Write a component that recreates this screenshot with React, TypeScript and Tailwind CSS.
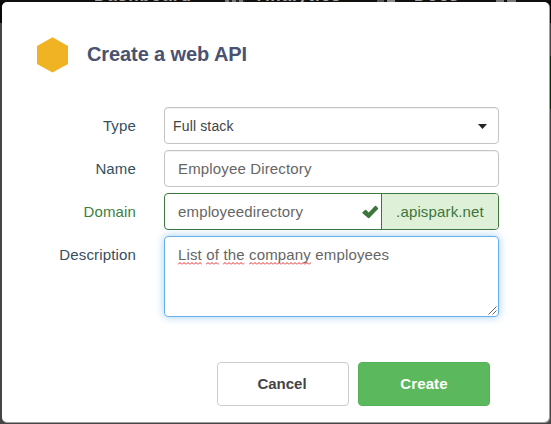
import type { ReactNode } from 'react';

function NavItem({ label, className }: { label: string; className: string }) {
  return (
    <span className={`absolute bottom-[-5px] text-[17px] leading-[22px] font-bold whitespace-nowrap text-[#a3a3a3] ${className}`}>
      {label}
    </span>
  );
}

function Backdrop() {
  return (
    <div className="absolute inset-0 flex flex-col bg-[#454545]">
      <div className="relative h-[2px] overflow-hidden bg-[#12100e]">
        <NavItem label="Dashboard" className="left-[94px] tracking-[1px]" />
        <NavItem label="Analytics" className="left-[257px] tracking-[1px]" />
        <NavItem label="Docs" className="left-[414px] tracking-[1px]" />
        <span className="absolute left-[225px] h-[2px] w-[20px] bg-[repeating-linear-gradient(90deg,#777_0_4px,#222_4px_7px)]" />
        <span className="absolute left-[377px] h-[2px] w-[7px] bg-[#555]" />
        <span className="absolute left-[387px] h-[2px] w-[8px] bg-[#888]" />
        <span className="absolute left-[496px] h-[2px] w-[8px] bg-[#777]" />
        <span className="absolute left-[507px] h-[2px] w-[9px] bg-[#777]" />
      </div>
      <div className="h-[21px] bg-[#080808]" />
      <div className="h-[33px]" />
      <div className="ml-auto h-[53px] w-[4px] bg-[#062a0b]" />
    </div>
  );
}

function Row({ label, valid, children }: { label: string; valid?: boolean; children: ReactNode }) {
  return (
    <div className="flex">
      <label
        className={`w-[134px] shrink-0 pt-[9px] text-right text-[15px] leading-[20px] tracking-[0.15px] ${valid ? 'text-[#3c7f3e]' : 'text-[#34505e]'}`}
      >
        {label}
      </label>
      <div className="ml-[28px] w-[335px]">{children}</div>
    </div>
  );
}

export default function App() {
  return (
    <div className="relative h-[424px] w-[551px] overflow-hidden font-['Liberation_Sans',Arial,sans-serif]">
      <Backdrop />
      <div className="relative mt-[2px] ml-[2px] flex h-[420px] w-[547px] flex-col rounded-[5px] bg-white shadow-[0.5px_0.5px_0_0.5px_#a0a0a0]">
        <header className="flex h-[105px] items-start pt-[35px] pl-[35px]">
          <svg width="31" height="36" viewBox="0 0 31 36" fill="#f0b323">
            <path d="M15.5 0.2 31 9V27L15.5 35.6 0 27V9Z" />
          </svg>
          <h1 className="ml-[19px] pt-[5px] text-[20px] leading-[24px] font-bold tracking-[-0.1px] text-[#4a5270]">Create a web API</h1>
        </header>

        <div className="flex flex-col gap-[6px]">
          <Row label="Type">
            <div className="flex h-[37px] items-center justify-between rounded-[4px] border border-[#c4c4c4] pt-px pr-[11px] pl-[8px] text-[14px] text-[#444] shadow-[inset_0_1px_1px_rgba(0,0,0,0.06)]">
              <span className="tracking-[0.15px]">Full stack</span>
              <svg width="9" height="5" viewBox="0 0 9 5" fill="#222">
                <path d="M0 0H9L4.5 5Z" />
              </svg>
            </div>
          </Row>
          <Row label="Name">
            <div className="flex h-[37px] items-center rounded-[4px] border border-[#c4c4c4] pt-[2px] pl-[13px] text-[15px] tracking-[0.15px] text-[#666] shadow-[inset_0_1px_1px_rgba(0,0,0,0.06)]">
              Employee Directory
            </div>
          </Row>
          <Row label="Domain" valid>
            <div className="flex h-[37px] overflow-hidden rounded-[4px] border border-[#3c763d]">
              <div className="flex flex-1 items-center justify-between pt-[2px] pr-[2px] pl-[13px] text-[15px] tracking-[0.15px] text-[#666]">
                <span>employeedirectory</span>
                <svg className="-mt-px" width="17" height="14" viewBox="0 0 17 14" fill="#3c763d">
                  <path d="M0.5 7.3 3 4.9Q3.6 4.4 4.2 5L6.7 7.4 12.9 1Q13.5 0.4 14.1 1L16 2.9Q16.5 3.5 16 4L7.3 12.9Q6.7 13.4 6.1 12.9L0.5 8.3Q0 7.8 0.5 7.3Z" />
                </svg>
              </div>
              <div className="flex w-[117px] items-center justify-center border-l border-[#3c763d] bg-[#dff0d8] pt-[2px] text-[15px] tracking-[0.15px] text-[#3c763d]">
                .apispark.net
              </div>
            </div>
          </Row>
          <Row label="Description">
            <div className="relative h-[81px] rounded-[4px] border border-[#66afe9] pt-[8px] pl-[13px] text-[15px] leading-[20px] tracking-[0.15px] text-[#666] shadow-[0_0_8px_rgba(102,175,233,0.6)]">
              <Misspelled>List</Misspelled> <Misspelled>of</Misspelled> <Misspelled>the</Misspelled>{' '}
              <Misspelled>company</Misspelled> employees
              <svg className="absolute right-px bottom-px" width="9" height="9" viewBox="0 0 9 9" stroke="#666" fill="none">
                <path d="M0.5 8.5 8.5 0.5M4.5 8.5 8.5 4.5" />
              </svg>
            </div>
          </Row>
        </div>

        <footer className="mt-[45px] flex gap-[9px] pl-[215px] text-[15px] font-bold">
          <button className="h-[44px] w-[132px] rounded-[4px] border border-[#ccc] bg-white pr-[2px] text-[#444]">Cancel</button>
          <button className="h-[44px] w-[132px] rounded-[4px] border border-[#56b156] bg-[#5cb85c] text-white tracking-[0.1px]">Create</button>
        </footer>
      </div>
    </div>
  );
}

function Misspelled({ children }: { children: ReactNode }) {
  return (
    <span className="relative inline-block">
      {children}
      <svg className="absolute bottom-0 left-0 h-[3px] w-full" stroke="#e02b2b" fill="none">
        <defs>
          <pattern id="squiggle" width="4" height="3" patternUnits="userSpaceOnUse">
            <path d="M0 2.5 2 0.5 4 2.5" />
          </pattern>
        </defs>
        <rect width="100%" height="3" fill="url(#squiggle)" stroke="none" />
      </svg>
    </span>
  );
}
